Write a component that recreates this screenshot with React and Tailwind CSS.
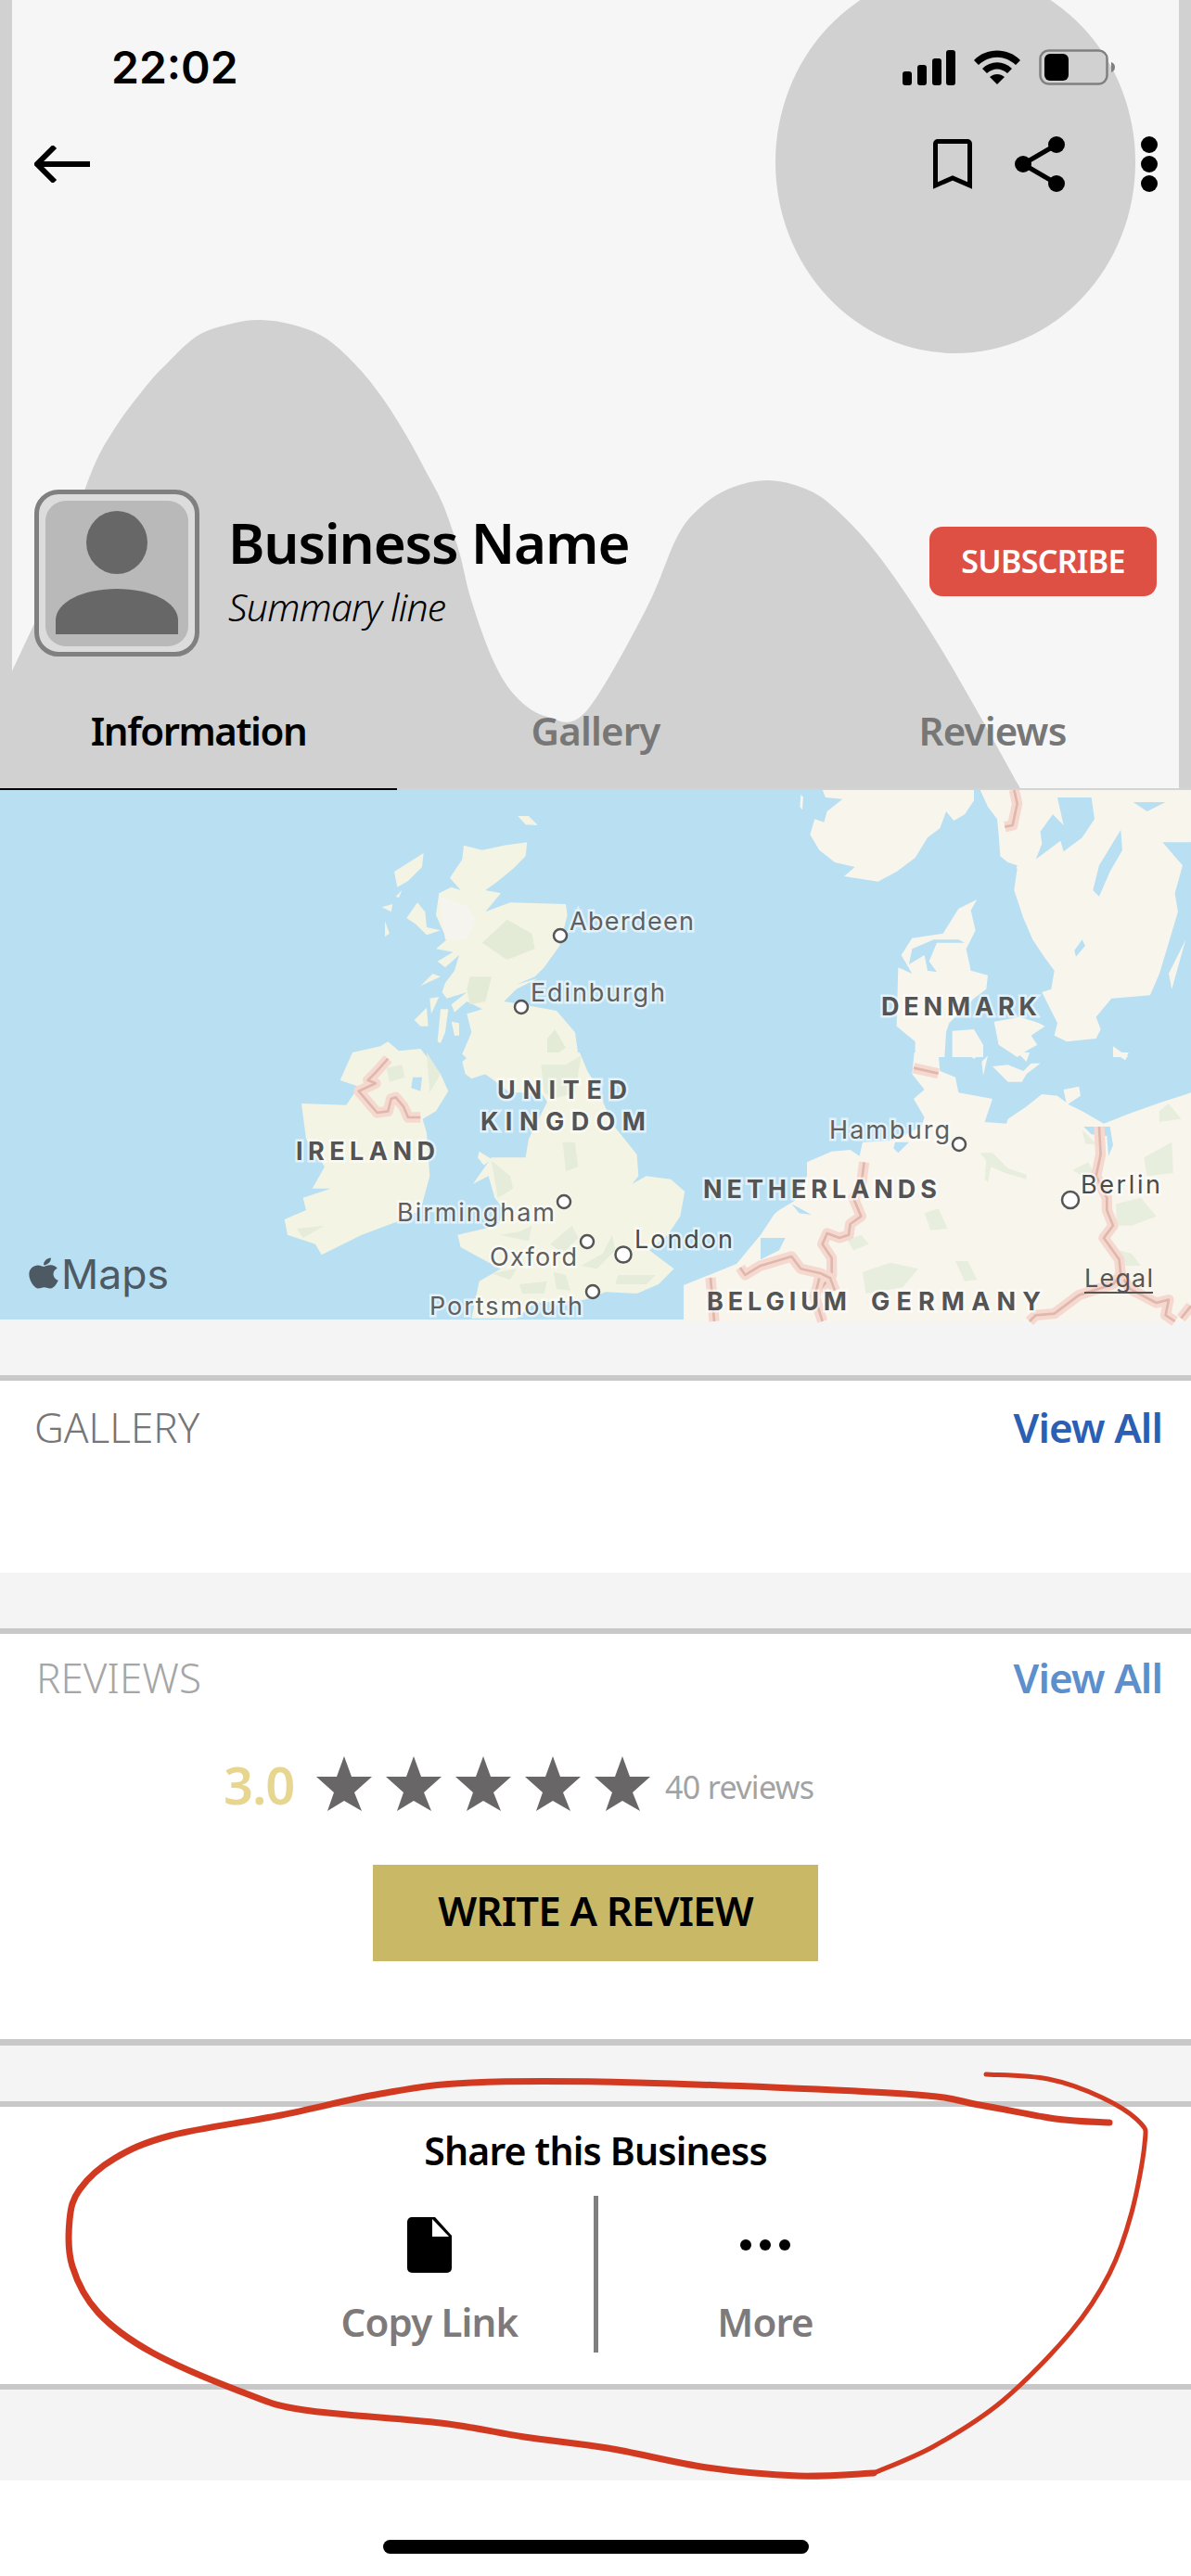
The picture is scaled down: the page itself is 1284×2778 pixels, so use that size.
import React from "react";

// catmull-rom through the points, for the hand drawn curves
function smooth(pts) {
  let d = `M${pts[0][0]} ${pts[0][1]}`;
  for (let i = 0; i < pts.length - 1; i++) {
    const p0 = pts[i - 1] || pts[i];
    const p1 = pts[i];
    const p2 = pts[i + 1];
    const p3 = pts[i + 2] || p2;
    const c1 = [p1[0] + (p2[0] - p0[0]) / 6, p1[1] + (p2[1] - p0[1]) / 6];
    const c2 = [p2[0] - (p3[0] - p1[0]) / 6, p2[1] - (p3[1] - p1[1]) / 6];
    d += ` C${c1[0]} ${c1[1]} ${c2[0]} ${c2[1]} ${p2[0]} ${p2[1]}`;
  }
  return d;
}

const hill = [
  [13, 724], [60, 620], [97, 513], [123, 463], [157, 417], [180, 392], [213, 362], [250, 349], [280, 345],
  [315, 350], [350, 364], [383, 393], [413, 430], [440, 473], [460, 510], [478, 545], [495, 595], [508, 647], [532, 713], [557, 752],
  [590, 773], [631, 768], [696, 658], [729, 581], [753, 549], [786, 527], [827, 518], [868, 527], [901, 549],
  [950, 603], [1016, 702], [1097, 845], [1100, 852],
];

const thinStroke = [
  [1063, 2237], [1130, 2242], [1188, 2262], [1229, 2289], [1234, 2312], [1220, 2386],
  [1196, 2452], [1155, 2514], [1081, 2589], [1007, 2638], [942, 2667],
];
const thickStroke = [
  [942, 2667], [860, 2670], [762, 2661], [655, 2640], [565, 2628], [475, 2613], [328, 2599],
  [262, 2580], [164, 2537], [106, 2494], [78, 2444], [75, 2394], [86, 2361], [123, 2328],
  [184, 2303], [303, 2281], [410, 2258], [508, 2246], [688, 2246], [975, 2258], [1056, 2270],
  [1138, 2285], [1196, 2289],
];

// map shapes traced at 3x, grouped by the part of the map they sit in
const ukLand = [
  // england, wales
  "625,30 660,0 1005,0 1030,60 1060,110 1110,230 1190,330 1195,400 1175,425 1220,400 1300,410 1345,450 1330,530 1290,590 1230,640 1310,700 1260,750 1190,780 1090,775 1020,800 860,810 800,860 655,860 680,740 750,700 730,690 620,630 610,590 740,560 760,510 730,470 710,400 660,425 720,340 830,340 840,280 900,160 880,130 780,130 700,70 655,85 635,70",
  // ireland
  "270,0 360,-20 385,-35 420,-5 490,-12 555,70 580,125 540,190 497,215 510,260 520,400 490,510 420,545 300,590 170,655 150,620 60,590 50,540 120,510 110,470 200,440 140,440 180,370 120,280 105,165 250,170 290,110 230,90",
  "680,320 720,345 695,365 675,340",
];
const ukGreen = [
  "380,50 430,40 440,80 390,95",
  "510,0 555,70 520,130",
  "90,570 180,560 110,600",
  "720,350 780,400 790,440 740,470",
  "950,290 990,290 1000,370 960,385",
  "810,580 850,560 840,610 745,590",
  "910,620 980,560 1000,600 950,650",
  "720,715 800,700 780,735",
  "810,750 900,740 890,780 820,780",
  "920,710 960,720 975,770 930,765",
  "1130,720 1250,720 1220,750 1120,750",
  "1010,690 1080,650 1110,590 1120,640 1060,700",
  "880,40 960,40 1010,10 990,130 920,150 890,130",
];
const scotland = [
  "630,95 690,110 760,95 835,85 830,130 790,170 735,215 700,240 750,250 700,310 780,280 960,285 965,320 940,420 890,490 860,520 800,545 870,525 800,560 760,600 820,610 930,630 990,700 1000,770 1030,870 760,870 690,830 625,770 655,700 640,640 690,625 640,600 600,635 590,610 640,570 575,590 560,570 570,540 600,500 615,450 570,490 545,470 595,440 540,430 575,400 540,320 550,250 590,230 620,240 585,200 625,140",
  "555,625 580,625 570,700 555,735 545,730",
  "590,665 615,670 615,710 600,710",
  "470,660 510,620 515,680 490,680",
  "445,330 480,280 505,310 510,360 555,370 510,385 475,350",
  "405,180 500,120 495,165 450,210 415,230",
  "410,260 430,240 420,265",
  "365,295 400,285 395,310",
  "375,340 390,380 375,390",
  "805,0 840,0 870,30 830,28",
  "490,495 555,520 490,550 530,510",
  "520,590 550,585 525,640",
];
const scotGreen = [
  "690,410 770,335 850,380 860,430 770,465",
  "650,520 720,520 700,600 650,610 640,560",
  "900,720 925,690 960,750 900,790",
  "870,810 960,800 965,870 880,865",
];
const nordic = [
  "200,5 210,30 265,35 215,75 205,110 175,100 160,150 190,200 240,240 305,255 270,285 380,302 440,270 500,225 540,160 580,130 600,75 625,105 660,85 690,40 690,5",
  "130,20 138,30 135,70 127,60",
  "710,5 735,60 765,100 770,150 775,220 800,240 830,260 820,330 850,420 880,490 920,550 950,590 940,650 910,660 960,760 950,800 990,820 1085,810 1100,780 1085,740 1135,680 1260,670 1290,600 1320,500 1350,400 1340,340 1365,250 1300,175 1392,175 1392,5",
  "1320,600 1375,490 1330,650",
  // jutland
  "700,360 680,395 695,460 665,520 680,590 735,605 730,650 690,680 610,760 600,790 595,870 500,870 500,820 440,770 445,580 490,600 455,540 490,485 590,470 640,390",
  "620,785 690,780 720,830 720,870 620,870",
  "755,755 840,740 900,760 920,770 875,800 895,830 860,850 830,870 770,830",
  "1140,835 1190,870 1140,870",
];
const nordicWater = [
  "960,30 1070,30 1080,100 1040,160 980,205 970,170 890,230 910,180 905,140 945,85 980,120",
  "1165,135 1170,200 1130,270 1095,350 1075,330 1095,250",
  "1205,45 1310,45 1250,75",
  "1040,490 1050,510 1020,545 1015,525",
  "490,520 560,490 640,490 660,500 570,500 545,560 570,595 540,590 530,540 480,570",
  "800,240 830,250 810,310 795,280",
];
const germany = [
  "497,0 490,70 530,120 495,150 530,210 520,240 430,285 330,290 320,335 290,315 230,320 150,355 150,400 130,440 110,480 60,510 45,522 0,590 -78,684 -249,753 -249,870 1392,870 1392,130 1300,160 1200,195 1110,230 1040,190 1000,170 960,140 910,135 860,175 800,215 795,230 725,225 750,150 640,130 630,80 580,60 575,0",
  "660,0 720,0 690,20",
  "830,0 870,0 860,30",
  "750,45 800,40 850,60 875,35 905,35 860,70 845,95 800,95",
  "980,120 1030,110 1035,140 990,170",
  "715,30 735,10 720,75",
  "1140,0 1190,0 1180,25",
];
const germanyGreen = [
  "710,325 750,325 800,375 860,395 860,410 790,390 745,370 735,420 725,410 730,350",
  "530,520 575,505 605,570 550,575",
  "330,710 420,680 510,700 460,760 340,780",
  "630,675 670,675 700,735 660,740",
  "280,605 325,590 350,620 300,640",
  "1240,340 1330,290 1335,390 1250,400",
  "1150,490 1230,470 1280,530 1200,560 1150,560",
  "1160,640 1200,650 1230,690 1180,690",
  "1010,380 1060,355 1080,390 1040,400",
  "1290,190 1320,165 1360,215 1290,225",
  "1040,250 1090,300 1050,295",
];
const germanyWater = [
  "1045,240 1130,240 1140,300 1125,335 1120,270 1070,265",
  "435,290 480,290 445,325 430,310",
  "100,490 165,525 125,520",
  "0,600 80,600 60,640 20,660 0,670",
];
const germanyBorders = [
  "495,50 575,68",
  "335,355 325,430 300,470 325,530 290,555 285,590 255,600 215,585 200,620 230,665 230,720 190,770",
  "-66,696 -50,720 0,690 100,660 130,700 195,715 225,730 240,770",
  "190,730 175,790 200,870",
  "-162,729 -150,870",
  "1095,240 1100,330 1085,400 1120,470 1120,510 1140,560 1110,600 1160,670 1165,720",
  "1165,720 1195,765 1280,810 1320,800 1310,850 1340,870",
  "1165,720 1140,750 1030,785 950,845 890,850 870,870",
  "1392,820 1360,860",
];
const irishBorder = "385,20 345,65 320,90 345,100 290,125 350,195 385,190 395,150 410,145 435,175 450,210 490,210";
const nordicBorder = "820,5 830,50 815,120 790,125";

const pins = [
  [604, 157, 7], [562, 234, 7], [1034, 382, 7], [1154, 442, 9], [608, 444, 7], [633, 487, 7], [672, 501, 8.5], [639, 541, 7],
];
const cities = [
  ["Aberdeen", 614, 151, 134, "#5f5f5f"],
  ["Edinburgh", 572, 228, 145, "#5f5f5f"],
  ["Hamburg", 894, 376, 130, "#5f5f5f"],
  ["Berlin", 1165, 435, 86, "#4a4a4a"],
  ["Birmingham", 428, 465, 170, "#5f5f5f"],
  ["London", 684, 494, 106, "#4a4a4a"],
  ["Oxford", 528, 513, 94, "#5f5f5f"],
  ["Portsmouth", 463, 566, 165, "#5f5f5f"],
];
const countries = [
  ["DENMARK", 950, 243, 168],
  ["UNITED", 536, 333, 140],
  ["KINGDOM", 518, 367, 178],
  ["IRELAND", 319, 399, 150],
  ["NETHERLANDS", 758, 440, 252],
  ["BELGIUM", 762, 561, 151],
  ["GERMANY", 939, 561, 183],
];

function Shapes({ list, fill }) {
  return list.map((p) => <polygon key={p} points={p} fill={fill} />);
}

function Border({ points }) {
  return (
    <>
      <polyline points={points} fill="none" stroke="#f5d9d0" strokeWidth="34" strokeLinejoin="round" />
      <polyline points={points} fill="none" stroke="#e0b7ab" strokeWidth="8" strokeLinejoin="round" />
    </>
  );
}

function MapView() {
  return (
    <svg viewBox="0 0 1284 571" className="block w-full h-[571px] overflow-visible font-['Inter',sans-serif]">
      <rect width="1284" height="571" fill="#b9dff3" />
      <g transform="translate(820 -2) scale(0.3333)">
        <Shapes list={nordic} fill="#f8f5ed" />
        <Shapes list={nordicWater} fill="#b9dff3" />
        <Border points={nordicBorder} />
      </g>
      <g transform="translate(820 283) scale(0.3333)">
        <Shapes list={germany} fill="#f8f5ed" />
        <Shapes list={germanyGreen} fill="#e8eedd" />
        <Shapes list={germanyWater} fill="#b9dff3" />
        {germanyBorders.map((p) => <Border key={p} points={p} />)}
      </g>
      <g transform="translate(290 28) scale(0.3333)">
        <Shapes list={scotland} fill="#f3f4e4" />
        <polygon points="550,260 640,290 670,340 640,400 570,400" fill="#f5f4ef" />
        <Shapes list={scotGreen} fill="#e3ebd6" />
      </g>
      <g transform="translate(290 283) scale(0.3333)">
        <Shapes list={ukLand} fill="#f3f4e4" />
        <Shapes list={ukGreen} fill="#e5ecd9" />
        <polygon points="465,80 495,80 490,125 460,115" fill="#b9dff3" />
        <Border points={irishBorder} />
      </g>
      {pins.map(([x, y, r]) => (
        <circle key={x} cx={x} cy={y} r={r} fill="#fff" stroke="#555" strokeWidth="2.5" />
      ))}
      {cities.map(([t, x, y, w, c]) => (
        <text key={t} x={x} y={y} textLength={w} fontSize="27" fill={c} stroke="#fff" strokeOpacity="0.6" strokeWidth="5" className="[paint-order:stroke]">
          {t}
        </text>
      ))}
      {countries.map(([t, x, y, w]) => (
        <text key={t} x={x} y={y} textLength={w} fontSize="27" fontWeight="700" fill="#545454" stroke="#fff" strokeOpacity="0.6" strokeWidth="5" className="[paint-order:stroke]">
          {t}
        </text>
      ))}
      <svg x="31" y="502" width="32" height="38" viewBox="0 0 384 512" preserveAspectRatio="none" fill="#4d5a63">
        <path d="M318.7 268.7c-.2-36.7 16.4-64.4 50-84.8-18.8-26.9-47.2-41.7-84.7-44.6-35.500-2.800-74.300 20.700-88.500 20.700-15 0-49.400-19.700-76.400-19.700C63.300 141.200 4 184.800 4 273.500q0 39.300 14.400 81.200c12.800 36.700 59 126.700 107.200 125.200 25.200-.6 43-17.900 75.800-17.900 31.800 0 48.300 17.900 76.400 17.900 48.600-.7 90.400-82.500 102.600-119.300-65.200-30.700-61.700-90-61.700-91.900zm-56.600-164.200c27.300-32.400 24.800-61.900 24-72.500-24.100 1.400-52 16.400-67.900 34.900-17.500 19.800-27.800 44.300-25.600 71.900 26.100 2 49.900-11.400 69.500-34.300z" />
      </svg>
      <text x="66" y="538" textLength="116" lengthAdjust="spacingAndGlyphs" fontSize="44" fill="#4d5a63">Maps</text>
      <text x="1169" y="536" textLength="74" fontSize="27" fill="#555">Legal</text>
      <rect x="1169" y="541" width="74" height="2" fill="#555" />
    </svg>
  );
}

function HeaderArt() {
  return (
    <svg viewBox="0 0 1284 852" className="absolute inset-0 w-full h-full">
      <rect width="1284" height="852" fill="#f6f6f6" />
      <rect width="13" height="852" fill="#d1d1d1" />
      <rect x="1271" width="13" height="852" fill="#d1d1d1" />
      <ellipse cx="1030" cy="175" rx="194" ry="206" fill="#d1d1d1" />
      <path d={smooth(hill) + " L0 852 L0 724 Z"} fill="#d1d1d1" />
    </svg>
  );
}

function StatusIcons() {
  return (
    <div className="flex items-center">
      <svg width="57" height="39" viewBox="0 0 57 39" fill="#000">
        <rect x="0" y="24" width="10" height="15" rx="3" />
        <rect x="16" y="17" width="10" height="22" rx="3" />
        <rect x="32" y="10" width="10" height="29" rx="3" />
        <rect x="47" y="1" width="10" height="38" rx="3" />
      </svg>
      <svg width="50" height="37" viewBox="0 0 50 37" fill="#000" className="ml-5">
        <path d="M0 11C13 -3 37 -3 50 11L45 16C33 5 17 5 5 16Z" />
        <path d="M9 20C18 11 32 11 41 20L36 25C29 19 21 19 14 25Z" />
        <path d="M17 29C22 25 28 25 33 29L25 37Z" />
      </svg>
      <svg width="82" height="39" viewBox="0 0 82 39" className="ml-5">
        <rect x="1.5" y="1.5" width="72" height="36" rx="9" fill="none" stroke="#808080" strokeWidth="2.5" />
        <rect x="6" y="5" width="26" height="29" rx="6" fill="#000" />
        <path d="M78 14C81 15 82 17 82 19.5C82 22 81 24 78 25Z" fill="#808080" />
      </svg>
    </div>
  );
}

function Toolbar() {
  return (
    <div className="flex items-center justify-between mt-[55px] h-[60px] pl-[37px] pr-[36px]">
      <svg width="60" height="40" viewBox="0 0 60 40" fill="none" stroke="#000" strokeWidth="6">
        <path d="M60 20H4" />
        <path d="M22 1L3 20L22 39" />
      </svg>
      <div className="flex items-center">
        <svg width="42" height="54" viewBox="0 0 42 54" fill="none" stroke="#000" strokeWidth="5">
          <path d="M2.500 50V5A2.500 2.500 0 0 1 5 2.500H37A2.500 2.500 0 0 1 39.500 5V50L21 42Z" />
        </svg>
        <svg width="54" height="60" viewBox="0 0 54 60" fill="#000" className="ml-[46px]">
          <circle cx="9" cy="30" r="9" />
          <circle cx="45" cy="9" r="9" />
          <circle cx="45" cy="51" r="9" />
          <path d="M9 30L45 9M9 30L45 51" stroke="#000" strokeWidth="5" />
        </svg>
        <svg width="18" height="60" viewBox="0 0 18 60" fill="#000" className="ml-[82px]">
          <circle cx="9" cy="9" r="9" />
          <circle cx="9" cy="30" r="9" />
          <circle cx="9" cy="51" r="9" />
        </svg>
      </div>
    </div>
  );
}

function Avatar() {
  return (
    <div className="w-[178px] h-[180px] shrink-0 rounded-[26px] border-[5px] border-[#808080] bg-[#dcdcdc] flex items-center justify-center">
      <div className="w-[154px] h-[157px] rounded-[22px] bg-[#b9b9b9] flex items-start justify-center">
        <svg width="132" height="134" viewBox="0 0 132 134" fill="#676767" className="mt-[11px]">
          <ellipse cx="66" cy="34" rx="33" ry="34" />
          <path d="M0 133V118C0 98 30 84 66 84C102 84 132 98 132 118V133Z" />
        </svg>
      </div>
    </div>
  );
}

function Tabs() {
  return (
    <div className="grid grid-cols-3 mt-auto h-[128px] text-[42px] font-semibold tracking-[-0.02em]">
      <div className="flex items-center justify-center border-b-2 border-black text-black tracking-[-0.035em]">Information</div>
      <div className="flex items-center justify-center border-b-2 border-[#d4d4d4] text-[#777]">Gallery</div>
      <div className="flex items-center justify-center border-b-2 border-[#d4d4d4] text-[#777]">Reviews</div>
    </div>
  );
}

function Star() {
  return (
    <svg width="60" height="59" viewBox="0 0 60 59" fill="#686666" className="shrink-0">
      <polygon points="30,0 38,22 60,22 41,39 49,59 30,48 12,59 19,39 0,22 22,22" />
    </svg>
  );
}

function Band({ className }) {
  return <div className={`bg-[#f4f4f4] border-b-[6px] border-[#c8c8c8] ${className}`} />;
}

export default function App() {
  return (
    <div className="relative w-[1284px] h-[2778px] overflow-hidden bg-white font-['Noto_Sans',sans-serif]">
      <header className="relative h-[852px]">
        <HeaderArt />
        <div className="relative flex flex-col h-full">
          <div className="flex items-center justify-between h-[39px] mt-[53px] pl-[120px] pr-[82px]">
            <span className="font-['Inter',sans-serif] font-semibold text-[48px] leading-none text-black">22:02</span>
            <StatusIcons />
          </div>
          <Toolbar />
          <div className="flex items-center mt-[321px] h-[180px] pl-[37px] pr-[37px]">
            <Avatar />
            <div className="ml-[31px] -mt-[10px]">
              <div className="text-[60px] leading-[82px] font-semibold tracking-[-0.02em] text-black">Business Name</div>
              <div className="text-[41px] leading-[56px] italic font-light tracking-[-0.02em] text-black">Summary line</div>
            </div>
            <button className="ml-auto w-[245px] h-[75px] -mt-[26px] rounded-[14px] bg-[#df5044] text-white text-[34px] font-semibold tracking-[-0.02em]">
              SUBSCRIBE
            </button>
          </div>
          <Tabs />
        </div>
      </header>

      <MapView />

      <Band className="h-[66px]" />
      <section className="h-[207px] bg-white">
        <div className="flex items-center justify-between pl-[37px] pr-[31px] pt-[26px]">
          <span className="text-[44px] leading-[48px] font-light text-[#767676]">GALLERY</span>
          <span className="text-[44px] leading-[48px] font-semibold tracking-[-0.02em] text-[#2a5fb4]">View All</span>
        </div>
      </section>
      <Band className="h-[66px]" />
      <section className="h-[437px] bg-white">
        <div className="flex items-center justify-between pl-[39px] pr-[31px] pt-[23px]">
          <span className="text-[44px] leading-[48px] font-light text-[#a6a6a6]">REVIEWS</span>
          <span className="text-[44px] leading-[48px] font-semibold tracking-[-0.02em] text-[#5c8fcb]">View All</span>
        </div>
        <div className="flex items-center pl-[241px] mt-[61px]">
          <span className="text-[56px] leading-none font-semibold tracking-[-0.02em] text-[#e6d68f] w-[100px]">3.0</span>
          <div className="flex gap-[15px]">
            <Star />
            <Star />
            <Star />
            <Star />
            <Star />
          </div>
          <span className="ml-[16px] mt-[6px] text-[34px] leading-none tracking-[-0.02em] text-[#a3a3a3]">40 reviews</span>
        </div>
        <button className="block mx-auto mt-[58px] pb-[6px] w-[480px] h-[104px] bg-[#c9b865] text-[44px] font-semibold tracking-[-0.02em] text-black">
          WRITE A REVIEW
        </button>
      </section>
      <Band className="h-[73px] border-t-[7px]" />
      <section className="h-[299px] bg-white flex flex-col items-center">
        <div className="mt-[22px] text-[41px] leading-[50px] font-semibold tracking-[-0.02em] text-black">Share this Business</div>
        <div className="flex mt-[24px] h-[169px]">
          <div className="w-[358px] pl-[4px] flex flex-col items-center">
            <svg width="48" height="60" viewBox="0 0 48 60" className="mt-[23px]">
              <path d="M5 0H30L48 20V55A5 5 0 0 1 43 60H5A5 5 0 0 1 0 55V5A5 5 0 0 1 5 0Z" fill="#000" />
              <path d="M27 2V21H45Z" fill="#fff" />
            </svg>
            <span className="mt-[28px] text-[42px] leading-[50px] font-semibold tracking-[-0.02em] text-[#7e7a7a]">Copy Link</span>
          </div>
          <div className="w-[5px] bg-[#7f7f7f]" />
          <div className="w-[357px] pl-[3px] flex flex-col items-center">
            <svg width="54" height="60" viewBox="0 0 54 60" fill="#000" className="mt-[23px]">
              <circle cx="6" cy="30" r="6" />
              <circle cx="27" cy="30" r="6" />
              <circle cx="48" cy="30" r="6" />
            </svg>
            <span className="mt-[28px] text-[42px] leading-[50px] font-semibold tracking-[-0.02em] text-[#7e7a7a]">More</span>
          </div>
        </div>
      </section>
      <div className="h-[104px] bg-[#f4f4f4] border-t-[6px] border-[#c8c8c8]" />

      <div className="flex justify-center mt-[64px]">
        <div className="w-[459px] h-[15px] rounded-full bg-black" />
      </div>

      {/* red pen mark drawn over the screenshot */}
      <svg viewBox="0 0 1284 2778" className="absolute inset-0 w-full h-full pointer-events-none" fill="none" stroke="#d13a20" strokeLinecap="round" strokeLinejoin="round">
        <path d={smooth(thinStroke)} strokeWidth="5" />
        <path d={smooth(thickStroke)} strokeWidth="7" />
      </svg>
    </div>
  );
}
